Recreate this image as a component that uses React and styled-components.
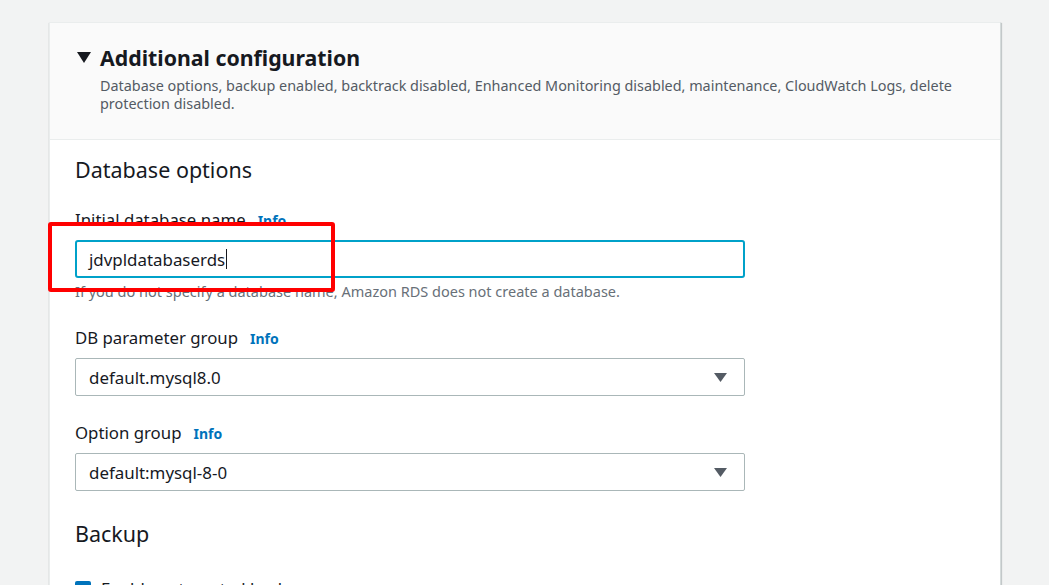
import React from 'react';
import styled, { createGlobalStyle } from 'styled-components';

const GlobalStyle = createGlobalStyle`
  body {
    margin: 0;
    background: #f2f3f3;
    font-family: "Noto Sans", "Open Sans", Arial, sans-serif;
    color: #16191f;
  }
`;

const Page = styled.div`
  height: 585px;
  overflow: hidden;
  padding: 22px 0 0 49px;
  position: relative;
`;

const Card = styled.div`
  width: 950px;
  background: #fff;
  border: 1px solid #eaeded;
  border-right-color: #d5dbdb;
  box-shadow: 0 1px 1px 0 rgba(0, 28, 36, 0.3), 1px 1px 1px 0 rgba(0, 28, 36, 0.15);
`;

const Header = styled.div`
  background: #fafafa;
  border-bottom: 1px solid #eaeded;
  padding: 21px 30px 26px 27px;
  display: flex;
  gap: 9px;
`;

const Caret = styled.svg`
  flex: none;
  margin-top: 8px;
`;

const HeaderText = styled.div`
  display: flex;
  flex-direction: column;
  gap: 5px;
`;

const Title = styled.h2`
  margin: 0;
  font-size: 21.3px;
  line-height: 28px;
  font-weight: 700;
`;

const Description = styled.p`
  margin: 0;
  font-size: 14.4px;
  line-height: 18px;
  color: #545b64;
  max-width: 880px;
`;

const Body = styled.div`
  padding: 17px 25px 40px;
  display: flex;
  flex-direction: column;
`;

const SectionTitle = styled.h3`
  margin: ${p => p.$top || 0}px 0 0;
  font-size: 21.5px;
  line-height: 26px;
  font-weight: 400;
`;

const Field = styled.div`
  margin-top: ${p => p.$top}px;
  display: flex;
  flex-direction: column;
  width: 670px;
`;

const Label = styled.label`
  font-size: 16.8px;
  line-height: 22px;
  display: flex;
  align-items: baseline;
  gap: 12px;
`;

const Info = styled.a`
  font-size: 14px;
  font-weight: 700;
  color: #0073bb;
  text-decoration: none;
`;

const TextBox = styled.div`
  margin-top: 8px;
  height: 34px;
  border: 2px solid #00a1c9;
  border-radius: 3px;
  padding: 0 12px;
  display: flex;
  align-items: center;
  font-size: 16.9px;
`;

const Cursor = styled.span`
  display: inline-block;
  width: 1px;
  height: 20px;
  background: #16191f;
  margin-left: 1px;
`;

const Hint = styled.div`
  margin-top: 4px;
  font-size: 14.5px;
  line-height: 18px;
  color: #687078;
`;

const Select = styled.div`
  margin-top: 8px;
  height: 36px;
  border: 1px solid #aab7b8;
  border-radius: 2px;
  padding: 0 17px 0 13px;
  display: flex;
  align-items: center;
  justify-content: space-between;
  font-size: 16.9px;
`;

const CheckRow = styled.div`
  margin-top: 31px;
  display: flex;
  align-items: center;
  gap: 10px;
  font-size: 16.8px;
  line-height: 22px;
`;

const Box = styled.span`
  width: 16px;
  height: 16px;
  border-radius: 2px;
  background: #0073bb;
  flex: none;
`;

const Highlight = styled.div`
  position: absolute;
  left: 48px;
  top: 222px;
  width: 279px;
  height: 62px;
  border: 4px solid #ff0000;
  border-radius: 3px;
  pointer-events: none;
`;

const Arrow = () => (
  <svg width="13" height="9" viewBox="0 0 13 9">
    <path d="M0 0 H13 L6.5 9 Z" fill="#545b64" />
  </svg>
);

const SelectField = ({ label, value, top }) => (
  <Field $top={top}>
    <Label>
      {label}
      <Info>Info</Info>
    </Label>
    <Select>
      <span>{value}</span>
      <Arrow />
    </Select>
  </Field>
);

const App = () => (
  <Page>
    <GlobalStyle />
    <Card>
      <Header>
        <Caret width="14" height="11" viewBox="0 0 14 11">
          <path d="M0 0 H14 L7 11 Z" fill="#16191f" />
        </Caret>
        <HeaderText>
          <Title>Additional configuration</Title>
          <Description>
            Database options, backup enabled, backtrack disabled, Enhanced Monitoring disabled, maintenance, CloudWatch Logs, delete protection disabled.
          </Description>
        </HeaderText>
      </Header>
      <Body>
        <SectionTitle>Database options</SectionTitle>
        <Field $top={26}>
          <Label>
            Initial database name
            <Info>Info</Info>
          </Label>
          <TextBox>
            jdvpldatabaserds
            <Cursor />
          </TextBox>
          <Hint>If you do not specify a database name, Amazon RDS does not create a database.</Hint>
        </Field>
        <SelectField label="DB parameter group" value="default.mysql8.0" top={27} />
        <SelectField label="Option group" value="default:mysql-8-0" top={26} />
        <SectionTitle $top={30}>Backup</SectionTitle>
        <CheckRow>
          <Box />
          Enable automated backups
        </CheckRow>
      </Body>
    </Card>
    <Highlight />
  </Page>
);

export default App;
